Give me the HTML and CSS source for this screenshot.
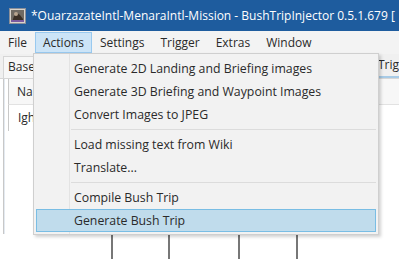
FILE: index.html
```html
<!DOCTYPE html>
<html lang="en">
<head>
<meta charset="UTF-8" />
<title>BushTripInjector</title>
<link rel="stylesheet" href="styles.css">
</head>
<body>

<div class="window">
  <!-- タイトルバー -->
  <div class="titlebar">
    <svg class="app-icon" width="17" height="16" viewBox="0 0 17 16">
      <rect x="0.5" y="0.5" width="16" height="15" fill="#d9d4cc" stroke="#8a8f99"/>
      <rect x="2" y="2" width="13" height="12" fill="#6f6a62"/>
      <path d="M3 14 L5 8 L8 5 L11 7 L14 11 L14 14 Z" fill="#3b3026"/>
      <circle cx="7" cy="6" r="2" fill="#b8a58f"/>
      <rect x="2" y="12" width="13" height="2" fill="#7a5aa0"/>
    </svg>
    <span class="title-text">*OuarzazateIntl-MenaraIntl-Mission - BushTripInjector 0.5.1.679 [</span>
  </div>

  <!-- メニューバー -->
  <div class="menubar">
    <div class="menu-item">File</div>
    <div class="menu-item open">Actions</div>
    <div class="menu-item">Settings</div>
    <div class="menu-item">Trigger</div>
    <div class="menu-item">Extras</div>
    <div class="menu-item">Window</div>
  </div>

  <!-- 作業領域 -->
  <div class="workspace">
    <div class="tabs">
      <div class="tab">Base</div>
      <div class="tab-spacer"></div>
      <div class="tab tab-right">Trig</div>
    </div>
    <div class="panel">
      <div class="panel-inner">
        <div class="col-head">Name</div>
        <div class="cell">Ighil</div>
      </div>
    </div>
    <div class="ticks">
      <div class="tick" style="width:55px"></div>
      <div class="tick" style="width:68px"></div>
      <div class="tick" style="width:56px"></div>
      <div class="tick"></div>
    </div>

    <!-- ドロップダウン -->
    <div class="dropdown">
      <div class="dd-item">Generate 2D Landing and Briefing images</div>
      <div class="dd-item">Generate 3D Briefing and Waypoint Images</div>
      <div class="dd-item">Convert Images to JPEG</div>
      <div class="dd-sep"></div>
      <div class="dd-item">Load missing text from Wiki</div>
      <div class="dd-item">Translate...</div>
      <div class="dd-sep"></div>
      <div class="dd-item">Compile Bush Trip</div>
      <div class="dd-item active">Generate Bush Trip</div>
    </div>
  </div>
</div>

</body>
</html>
```

FILE: styles.css
```css
body {
  margin: 0;
  font-family: 'Open Sans', 'Noto Sans', sans-serif;
  font-size: 12px;
  color: #2a2a2a;
  background: #fff;
  overflow: hidden;
}
.window {
  width: 399px;
  height: 259px;
  display: flex;
  flex-direction: column;
  overflow: hidden;
}
/* タイトルバー */
.titlebar {
  height: 31px;
  background: #1e5c9e;
  color: #fff;
  display: flex;
  align-items: center;
  padding-left: 9px;
  white-space: nowrap;
  font-size: 12px;
}
.app-icon {
  flex: none;
  margin-right: 5px;
}
/* メニューバー */
.menubar {
  height: 23px;
  background: #f3f3f3;
  display: flex;
  align-items: center;
  white-space: nowrap;
}
.menu-item {
  padding: 0 7px;
  height: 19px;
  line-height: 19px;
  border: 1px solid transparent;
}
.menu-item.open {
  background: #cce4f7;
  border-color: #99c9ef;
}
/* 作業領域 */
.workspace {
  flex: 1;
  position: relative;
  background: #fff;
  display: flex;
  flex-direction: column;
}
.tabs {
  height: 24px;
  background: #f0f0f0;
  display: flex;
  align-items: flex-end;
  padding-left: 3px;
}
.tab {
  flex: none;
  height: 21px;
  line-height: 20px;
  padding: 0 4px;
  border: 1px solid #d6d6d6;
  border-bottom: none;
  background: #f7f7f7;
}
.tab-spacer {
  flex: 1;
  border-bottom: 1px solid #d6d6d6;
}
.tab-right {
  padding: 0 0 0 2px;
  border: none;
  border-bottom: 2px solid #a8cbe6;
  background: #f0f0f0;
}
.panel {
  height: 155px;
  padding-left: 3px;
  border-top: 1px solid #d6d6d6;
}
.panel-inner {
  height: 100%;
  border-left: 1px solid #c8c8c8;
  padding-left: 4px;
  box-shadow: inset 1px 0 0 #e4eaf1;
}
.col-head {
  height: 25px;
  line-height: 25px;
  padding-left: 8px;
  background: #f7f7f7;
  border-bottom: 1px solid #e2e2e2;
  border-left: 1px solid #c8c8c8;
}
.cell {
  height: 26px;
  line-height: 26px;
  padding-left: 9px;
  border-left: 1px solid #c8c8c8;
}
.ticks {
  flex: 1;
  display: flex;
  padding-left: 111px;
}
.tick {
  border-left: 2px solid #777;
}
/* ドロップダウン */
.dropdown {
  position: absolute;
  left: 33px;
  top: -1px;
  width: 340px;
  padding: 3px 2px 2px 2px;
  font-size: 12.3px;
  background: #f2f2f2;
  border: 1px solid #cfcfcf;
  box-shadow: 2px 2px 3px rgba(0, 0, 0, 0.18);
  white-space: nowrap;
  background-image: linear-gradient(#e3e3e3, #e3e3e3);
  background-size: 1px 100%;
  background-position: 35px 0;
  background-repeat: no-repeat;
}
.dd-item {
  height: 23px;
  line-height: 22px;
  padding-left: 37px;
  border: 1px solid transparent;
  box-sizing: border-box;
}
.dd-item.active {
  background: #c0dcec;
  border-color: #79bde4;
}
.dd-sep {
  height: 7px;
  margin-left: 35px;
  background: linear-gradient(#f2f2f2 3px, #dcdcdc 3px, #dcdcdc 4px, #f2f2f2 4px);
}
```
